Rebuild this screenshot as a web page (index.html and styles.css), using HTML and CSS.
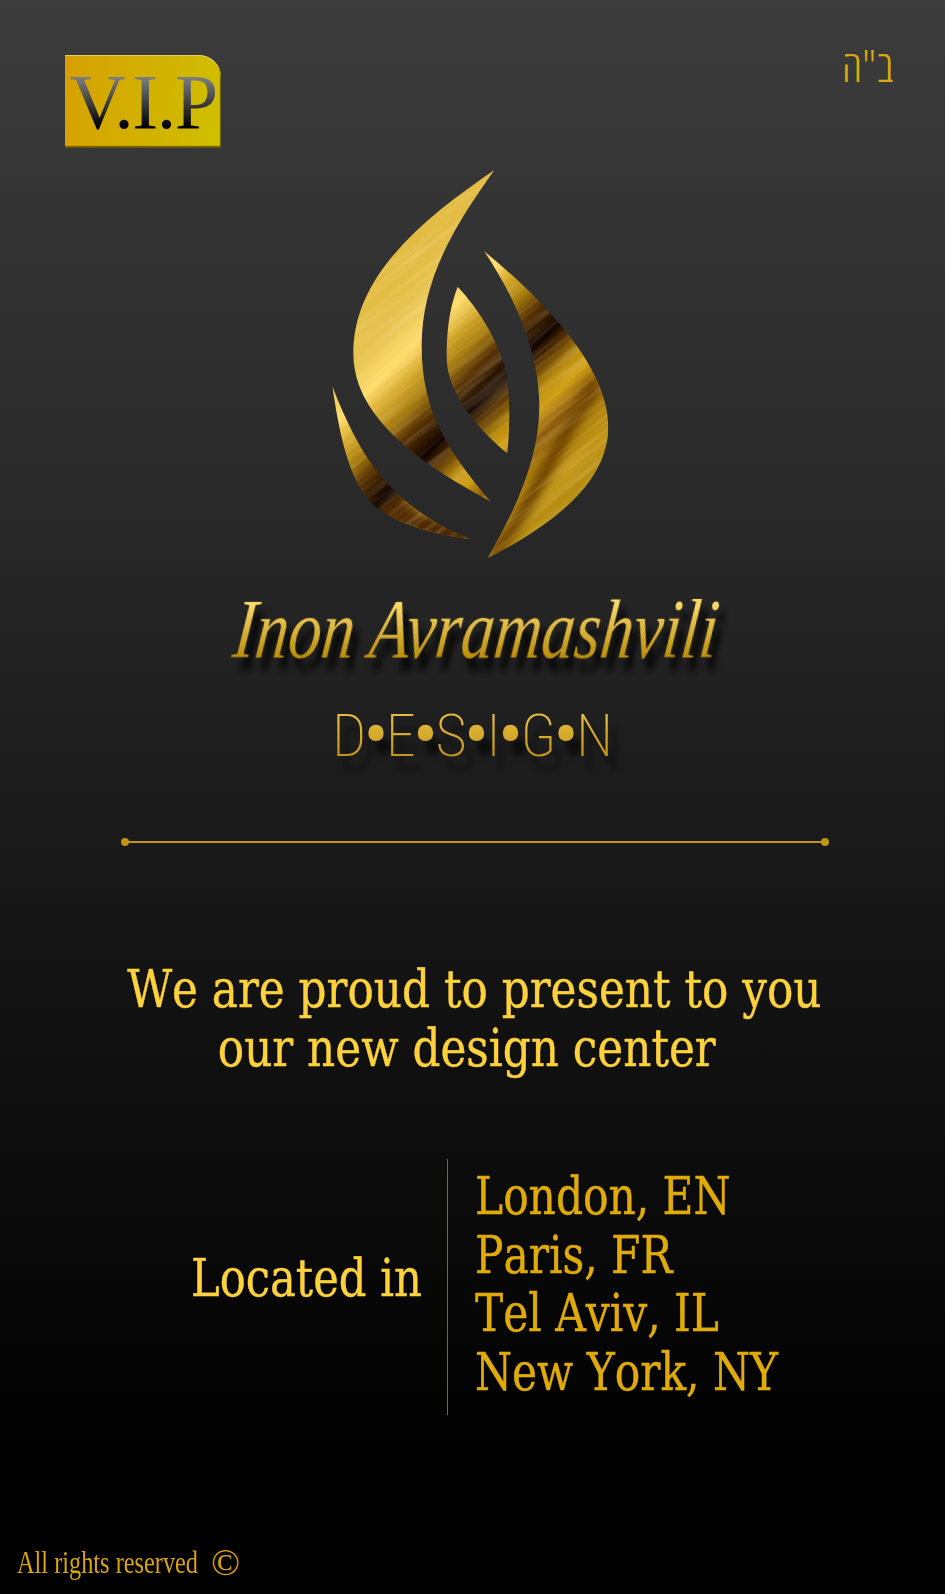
FILE: index.html
```html
<!DOCTYPE html>
<html lang="en">
<head>
    <meta charset="UTF-8">
    <meta name="viewport" content="width=device-width, initial-scale=1.0">
    <link rel="stylesheet" href="styles.css">
    <title>Inon Avramashvili Design</title>
</head>
<body>
    <div class="page">
        <header class="top-bar">
            <div class="vip-badge"><span class="vip-text">V.I.P</span></div>
            <div class="blessing" lang="he" dir="rtl">ב"ה</div>
        </header>

        <svg class="logo" viewBox="0 0 960 1230" aria-hidden="true">
            <defs>
                <linearGradient id="gold" gradientUnits="userSpaceOnUse" x1="0" y1="0" x2="1000" y2="1000">
                    <stop offset="0.30" stop-color="#e2bb42"/>
                    <stop offset="0.375" stop-color="#e8c452"/>
                    <stop offset="0.435" stop-color="#ffdc6c"/>
                    <stop offset="0.475" stop-color="#d6aa2c"/>
                    <stop offset="0.52" stop-color="#a87e10"/>
                    <stop offset="0.56" stop-color="#5a3404"/>
                    <stop offset="0.6175" stop-color="#100300"/>
                    <stop offset="0.65" stop-color="#5e3804"/>
                    <stop offset="0.69" stop-color="#bc8e10"/>
                    <stop offset="0.72" stop-color="#d0a016"/>
                    <stop offset="0.76" stop-color="#8a5808"/>
                    <stop offset="0.80" stop-color="#ab7e0c"/>
                    <stop offset="0.85" stop-color="#c09414"/>
                    <stop offset="0.95" stop-color="#a8820e"/>
                </linearGradient>
                <clipPath id="flame">
                    <path d="M553 30C350 170 130 340 130 580C130 790 370 930 542 1025C420 880 335 760 335 560C335 350 440 190 553 30Z"/>
                    <path d="M443 380C415 450 410 530 410 590C410 710 520 820 592 880C600 800 600 720 590 650C575 550 500 440 443 380Z"/>
                    <path d="M522 273C600 390 688 560 688 740C688 900 610 1060 534 1193C700 1110 895 980 895 800C895 620 700 420 522 273Z"/>
                    <path d="M67 678C85 800 110 940 175 1020C240 1090 380 1125 480 1137C330 1080 230 980 170 890C130 830 90 740 67 678Z"/>
                </clipPath>
                <filter id="brushed" x="0" y="0" width="100%" height="100%">
                    <feTurbulence type="fractalNoise" baseFrequency="0.003 0.06" numOctaves="3" seed="4"/>
                    <feColorMatrix type="matrix" values="0 0 0 0 1  0 0 0 0 0.85  0 0 0 0 0.45  0.5 0 0 0 -0.21"/>
                </filter>
                <filter id="soft"><feGaussianBlur stdDeviation="14"/></filter>
            </defs>
            <g clip-path="url(#flame)">
                <rect width="960" height="1230" fill="url(#gold)"/>
                <path class="logo-streak" d="M540 1190C660 1060 730 860 860 670" filter="url(#soft)"/>
                <path class="logo-shade" d="M230 1040C300 1090 400 1120 490 1140" filter="url(#soft)"/>
                <rect x="-700" y="-200" width="2400" height="2000" filter="url(#brushed)" transform="rotate(-38 480 615)"/>
            </g>
        </svg>

        <div class="brand-name">Inon Avramashvili</div>
        <div class="brand-sub">D<span>•</span>E<span>•</span>S<span>•</span>I<span>•</span>G<span>•</span>N</div>

        <div class="rule"></div>

        <p class="intro">We are proud to present to you<br><span class="intro-second">our new design center</span></p>

        <section class="locations">
            <div class="locations-label">Located in</div>
            <ul class="locations-list">
                <li>London, EN</li>
                <li>Paris, FR</li>
                <li>Tel Aviv, IL</li>
                <li>New York, NY</li>
            </ul>
        </section>

        <footer class="page-footer">
            <span class="rights">All rights reserved</span>
            <span class="copy">©</span>
        </footer>
    </div>
</body>
</html>
```

FILE: styles.css
```css
body {
    margin: 0;
    background: #000;
}

.page {
    width: 945px;
    height: 1594px;
    overflow: hidden;
    display: flex;
    flex-direction: column;
    align-items: center;
    background: linear-gradient(#3c3c3c 0, #2a2a2a 480px, #141414 960px, #000 1480px);
    font-family: "DejaVu Serif", "Liberation Serif", serif;
    font-stretch: condensed;
}

.top-bar {
    width: 100%;
    box-sizing: border-box;
    height: 148px;
    padding: 55px 52px 0 65px;
    display: flex;
    justify-content: space-between;
    align-items: flex-start;
}

.vip-badge {
    width: 156px;
    height: 93px;
    box-sizing: border-box;
    border-top-right-radius: 22px;
    background: linear-gradient(100deg, #d6a000, #cfc000);
    box-shadow: inset 0 1px 0 #e8cc60, inset -1px -2px 1px #6a5800;
    text-align: center;
    font-family: "Liberation Serif", serif;
}

.vip-text {
    display: inline-block;
    margin-top: 5px;
    font-size: 78px;
    line-height: 84px;
    letter-spacing: -1.5px;
    background: linear-gradient(#8a8a8a 15%, #000 80%);
    -webkit-background-clip: text;
    background-clip: text;
    color: transparent;
}

.blessing {
    margin-top: -20px;
    font-family: "Open Sans", "Liberation Sans", sans-serif;
    font-weight: 300;
    font-size: 44px;
    line-height: 60px;
    color: #d8aa10;
}

.logo {
    width: 320px;
    height: 410px;
    margin: 12px 0 0 -5px;
    flex-shrink: 0;
}

.logo-streak {
    fill: none;
    stroke: #6e4205;
    stroke-width: 40;
}

.logo-shade {
    fill: none;
    stroke: #4e2804;
    stroke-width: 70;
}

.brand-name {
    margin: 18px 0 0 8px;
    padding: 0 14px;
    font-family: "Liberation Serif", serif;
    font-style: italic;
    font-size: 84px;
    line-height: 84px;
    white-space: nowrap;
    background: linear-gradient(#f8d868 20%, #b88a08 85%);
    -webkit-background-clip: text;
    background-clip: text;
    color: transparent;
    filter: drop-shadow(9px 12px 4px #000);
    transform: scaleX(0.785) skewX(-8deg);
}

.brand-sub {
    margin-top: 32px;
    font-family: Roboto, "Open Sans", sans-serif;
    font-weight: 200;
    font-size: 60px;
    line-height: 64px;
    background: linear-gradient(#f0c848, #b88a10);
    -webkit-background-clip: text;
    background-clip: text;
    color: transparent;
    filter: drop-shadow(8px 14px 3px rgba(0, 0, 0, 0.6));
}

.brand-sub span {
    margin: 0 -3px;
    font-size: 76px;
    font-weight: 400;
    line-height: 0;
    vertical-align: -5px;
}

.rule {
    width: 700px;
    height: 2px;
    margin: 73px 0 0 5px;
    background: #c3950f;
    position: relative;
    flex-shrink: 0;
}

.rule::before,
.rule::after {
    content: "";
    position: absolute;
    top: -3px;
    width: 8px;
    height: 8px;
    border-radius: 50%;
    background: #c3950f;
}

.rule::before { left: -4px; }
.rule::after { right: -4px; }

.intro {
    margin: 117px 0 0 4px;
    text-align: center;
    font-size: 52px;
    line-height: 58.5px;
    font-kerning: none;
    -webkit-text-stroke: 0.4px currentColor;
    color: #ffd23c;
    transform: scaleX(0.935);
}

.intro-second {
    display: inline-block;
    margin-right: 16px;
}

.locations {
    margin: 82px 0 0 62px;
    display: flex;
    align-items: center;
    align-self: flex-start;
}

.locations-label {
    width: 385px;
    box-sizing: border-box;
    padding-right: 25px;
    margin-bottom: 18px;
    text-align: right;
    font-size: 52px;
    line-height: 58.5px;
    -webkit-text-stroke: 0.4px currentColor;
    color: #ffd23c;
    transform: scaleX(0.925);
    transform-origin: 360px center;
}

.locations-list {
    margin: 0;
    padding: 8px 0 12px 27px;
    height: 256px;
    box-sizing: border-box;
    list-style: none;
    border-left: 1px solid #8a6a10;
    font-size: 52px;
    line-height: 58.5px;
    font-kerning: none;
    -webkit-text-stroke: 0.4px currentColor;
    color: #e0ab08;
}

.locations-list li {
    transform: scaleX(0.905);
    transform-origin: left center;
}

.page-footer {
    margin-top: auto;
    align-self: flex-start;
    height: 64px;
    padding-left: 17px;
    display: flex;
    align-items: center;
    font-family: "Liberation Serif", serif;
    color: #d8a50c;
}

.rights {
    width: 180px;
    font-size: 32px;
    white-space: nowrap;
    transform: scaleX(0.76);
    transform-origin: left center;
}

.copy {
    margin-left: 14px;
    font-size: 38px;
}
```
